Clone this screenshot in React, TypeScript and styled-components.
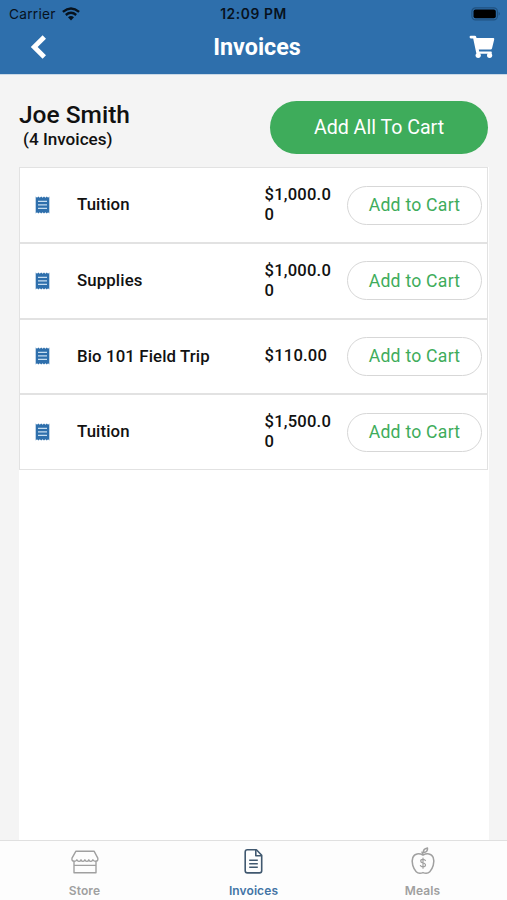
import React from "react";
import styled, { createGlobalStyle } from "styled-components";

const GlobalStyle = createGlobalStyle`
  * { box-sizing: border-box; }
  body { margin: 0; background: #f4f4f4; font-family: Roboto, sans-serif; color: #111; }
  button { font-family: inherit; padding: 0; cursor: pointer; }
  svg { display: block; }
`;

const Screen = styled.div`
  width: 507px;
  height: 900px;
  display: flex;
  flex-direction: column;
  background: #f4f4f4;
  overflow: hidden;
`;

const Header = styled.header`
  height: 75px;
  flex: none;
  background: #2e6fac;
  border-bottom: 1px solid #c9d8e6;
`;

const StatusBar = styled.div`
  height: 27px;
  display: grid;
  grid-template-columns: 1fr auto 1fr;
  align-items: center;
  padding: 1px 6px 0 9px;
  font-family: Inter, sans-serif;
  font-size: 13.7px;
  color: #07121d;
`;

const Carrier = styled.div`
  display: flex;
  align-items: center;
  gap: 6px;
  letter-spacing: 0.25px;
`;

const Clock = styled.div`
  margin-right: 3px;
  font-weight: 600;
  font-size: 13.8px;
  letter-spacing: 0.6px;
`;

const BatterySlot = styled.div`
  display: flex;
  justify-content: flex-end;
`;

const NavBar = styled.div`
  height: 40px;
  display: grid;
  grid-template-columns: 1fr auto 1fr;
  align-items: center;
  padding: 0 12px 0 30px;
`;

const NavButton = styled.button<{ $end?: boolean }>`
  border: 0;
  background: none;
  justify-self: ${(p) => (p.$end ? "end" : "start")};
`;

const Title = styled.h1`
  margin: 0 11px 0 0;
  color: #fff;
  font-size: 23.3px;
  line-height: 28px;
  font-weight: 700;
`;

const Summary = styled.section`
  height: 92.4px;
  flex: none;
  display: flex;
  justify-content: space-between;
  padding: 26px 19px 0 19px;
`;

const Name = styled.h2`
  margin: 0;
  font-size: 24.5px;
  line-height: 28px;
  font-weight: 500;
`;

const Count = styled.div`
  margin: 1px 0 0 4px;
  font-size: 17.1px;
  line-height: 18px;
  font-weight: 500;
`;

const AddAllButton = styled.button`
  width: 218px;
  height: 53px;
  border: 0;
  border-radius: 27px;
  background: #3eac5b;
  color: #fff;
  font-size: 19.6px;
`;

const Panel = styled.main`
  flex: 1;
  margin: 0 18px 0 19px;
  background: #fff;
`;

const Row = styled.div`
  width: 469px;
  height: 75.65px;
  display: grid;
  grid-template-columns: 57px 187.5px 82.5px 135px;
  align-items: center;
  border: 1px solid #e2e2e2;
`;

const ReceiptSlot = styled.div`
  padding: 0 0 0 15px;
`;

const ItemName = styled.div`
  padding-bottom: 1.6px;
  font-size: 16.8px;
  line-height: 20px;
  font-weight: 500;
  letter-spacing: 0.12px;
`;

const Price = styled.div`
  width: 70px;
  font-size: 16.6px;
  line-height: 20px;
  font-weight: 500;
  letter-spacing: 0.2px;
  word-break: break-all;
`;

const AddButton = styled.button`
  width: 135px;
  height: 39px;
  border: 1px solid #d7d7d7;
  border-radius: 20px;
  background: #fff;
  color: #3eac5b;
  font-size: 17.6px;
  letter-spacing: 0.25px;
`;

const TabBar = styled.nav`
  height: 60px;
  flex: none;
  display: grid;
  grid-template-columns: repeat(3, 1fr);
  background: #fdfdfd;
  border-top: 1px solid #e0e0e0;
`;

const Tab = styled.div<{ $active?: boolean }>`
  display: flex;
  flex-direction: column;
  align-items: center;
  padding-top: 6px;
  gap: 6px;
  color: ${(p) => (p.$active ? "#4374a5" : "#a0a0a0")};
  font: 600 12px/16px Inter, sans-serif;
  letter-spacing: 0.1px;
`;

const WifiIcon = () => (
  <svg width="18" height="14" viewBox="0 0 18 14">
    <g fill="none" stroke="currentColor" strokeWidth="2.4">
      <path d="M.9 4.8Q9-2 17.1 4.8" />
      <path d="M3.8 8Q9 3.7 14.2 8" />
    </g>
    <path d="M6 10.2Q9 8 12 10.2L9 13.5Z" fill="currentColor" />
  </svg>
);

const BatteryIcon = () => (
  <svg width="30" height="14" viewBox="0 0 30 14">
    <rect x=".9" y=".9" width="25.5" height="12" rx="3.6" fill="none" stroke="#205280" strokeWidth="1.2" />
    <rect x="2.5" y="2.5" width="22.3" height="8.8" rx="2" fill="#000" />
    <path d="M27.6 4.8Q30.1 6.8 27.6 8.8Z" fill="#205280" />
  </svg>
);

const BackIcon = () => (
  <svg width="17" height="26" viewBox="0 0 17 26">
    <path d="M14.3 3 4.2 13l10.1 10" fill="none" stroke="#fff" strokeWidth="4.8" />
  </svg>
);

const CartIcon = () => (
  <svg width="26" height="24" viewBox="0 0 26 24">
    <path
      d="M1.8.8h4.1q1 0 1.3 1l.3 1.3h16.7q1.3 0 1 1.3l-2.2 9.1q-.3 1-1.3 1H9.8l.4 2.1h11.6q1.3 0 1 1.2l-.2 1H8.4q-1 0-1.2-1L4.2 3.4H1.8Q.6 3.4.6 2.1.6.8 1.8.8Z"
      fill="#fff"
    />
    <circle cx="9.2" cy="20.3" r="2.6" fill="#fff" />
    <circle cx="20.6" cy="20.3" r="2.6" fill="#fff" />
  </svg>
);

const ReceiptIcon = () => (
  <svg width="15" height="18" viewBox="0 0 15 18">
    <path
      d="M.7.5 2 1.8 3.4.5l1.4 1.3L6.2.5l1.4 1.3L9 .5l1.4 1.3L11.8.5l1.3 1.3L14.3.5v17l-1.2-1.3-1.3 1.3-1.4-1.3L9 17.5l-1.4-1.3-1.4 1.3-1.4-1.3-1.4 1.3L2 16.2.7 17.5Z"
      fill="#2e6fac"
    />
    <path d="M3 5.3h9M3 8.8h9M3 12.3h9" stroke="#c6ddf0" strokeWidth="1.3" />
  </svg>
);

const StoreIcon = () => (
  <svg width="30" height="30" viewBox="0 0 30 30" fill="none" stroke="currentColor" strokeWidth="1.4" strokeLinejoin="round">
    <path d="M5.8 4.3h18.4l3.6 6.8q.5 3.2-2.2 3.2-1.7 0-2.7-1.5-2.3 3.2-4.1 0-1.9 3.2-3.9 0-2 3.2-3.9 0-1.8 3.2-4.1 0-1 1.5-2.7 1.5-2.7 0-2.2-3.2Z" />
    <path d="M4 14.5v11.2h22V14.5M4 18.4h22" />
  </svg>
);

const DocumentIcon = () => (
  <svg width="30" height="30" viewBox="0 0 30 30" fill="none" stroke="#40586f" strokeWidth="1.6" strokeLinejoin="round">
    <path d="M8.4 2.8h9l5.3 5.5v15.4q0 2.2-2.2 2.2H8.4q-2.2 0-2.2-2.2V5q0-2.2 2.2-2.2Z" />
    <path d="M16.8 3v5.7h5.7M10.2 13.3h8.6M10.2 16.8h8.6M10.2 20.3h8.6" />
  </svg>
);

const AppleIcon = () => (
  <svg width="30" height="30" viewBox="0 0 30 30" fill="none" stroke="currentColor" strokeWidth="1.5" strokeLinecap="round" strokeLinejoin="round">
    <path d="M15 8.2C11.2 6 6.5 6.3 4.8 10.6 3 15.2 5.3 21.8 8.2 24.7c2 2 4.1 1.8 6.8.9 2.7.9 4.8 1.1 6.8-.9 2.9-2.9 5.2-9.5 3.4-14.1C23.5 6.3 18.8 6 15 8.2Zm0-.2q-.1-1.6-1-2.9M15.5 5.4q-.5-3.7 4-4.4.4 4.4-4 4.4Z" />
    <path d="M17.4 13.5q-.6-1.2-2.4-1.2-2.3 0-2.3 1.8 0 1.5 2.3 1.9 2.5.4 2.5 2.1 0 1.8-2.5 1.8-2 0-2.6-1.4M15 11v10.2" strokeWidth="1.2" />
  </svg>
);

const invoices = [
  { name: "Tuition", price: "$1,000.00" },
  { name: "Supplies", price: "$1,000.00" },
  { name: "Bio 101 Field Trip", price: "$110.00" },
  { name: "Tuition", price: "$1,500.00" },
];

export default function App() {
  return (
    <Screen>
      <GlobalStyle />
      <Header>
        <StatusBar>
          <Carrier>Carrier <WifiIcon /></Carrier>
          <Clock>12:09 PM</Clock>
          <BatterySlot><BatteryIcon /></BatterySlot>
        </StatusBar>
        <NavBar>
          <NavButton aria-label="Back"><BackIcon /></NavButton>
          <Title>Invoices</Title>
          <NavButton $end aria-label="Cart"><CartIcon /></NavButton>
        </NavBar>
      </Header>
      <Summary>
        <div>
          <Name>Joe Smith</Name>
          <Count>(4 Invoices)</Count>
        </div>
        <AddAllButton>Add All To Cart</AddAllButton>
      </Summary>
      <Panel>
        {invoices.map((invoice, i) => (
          <Row key={i}>
            <ReceiptSlot><ReceiptIcon /></ReceiptSlot>
            <ItemName>{invoice.name}</ItemName>
            <Price>{invoice.price}</Price>
            <AddButton>Add to Cart</AddButton>
          </Row>
        ))}
      </Panel>
      <TabBar>
        <Tab><StoreIcon />Store</Tab>
        <Tab $active><DocumentIcon />Invoices</Tab>
        <Tab><AppleIcon />Meals</Tab>
      </TabBar>
    </Screen>
  );
}
